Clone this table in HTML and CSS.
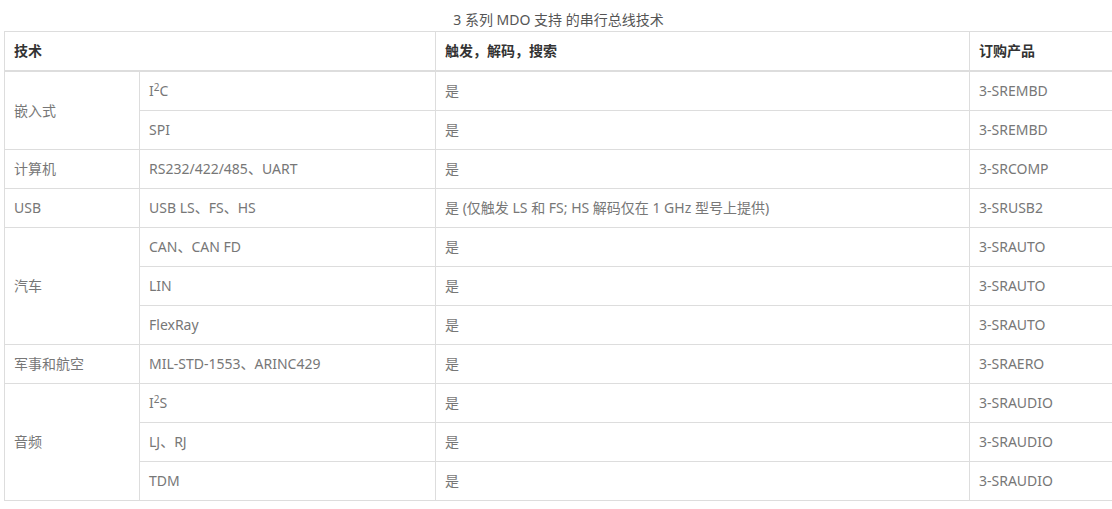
FILE: index.html
```html
<!DOCTYPE html>
<html lang="zh-CN">
<head>
<meta charset="utf-8">
<title>3 系列 MDO 支持 的串行总线技术</title>
<link rel="stylesheet" href="styles.css">
</head>
<body>
<div class="wrap">
<table class="bus">
  <caption>3 系列 MDO 支持 的串行总线技术</caption>
  <colgroup>
    <col class="c1"><col class="c2"><col class="c3"><col class="c4">
  </colgroup>
  <thead>
    <tr><th colspan="2">技术</th><th>触发，解码，搜索</th><th>订购产品</th></tr>
  </thead>
  <tbody>
    <tr><td rowspan="2">嵌入式</td><td>I<sup>2</sup>C</td><td>是</td><td>3-SREMBD</td></tr>
    <tr><td>SPI</td><td>是</td><td>3-SREMBD</td></tr>
    <tr><td>计算机</td><td>RS232/422/485、UART</td><td>是</td><td>3-SRCOMP</td></tr>
    <tr><td>USB</td><td>USB LS、FS、HS</td><td>是 (仅触发 LS 和 FS; HS 解码仅在 1 GHz 型号上提供)</td><td>3-SRUSB2</td></tr>
    <tr><td rowspan="3">汽车</td><td>CAN、CAN FD</td><td>是</td><td>3-SRAUTO</td></tr>
    <tr><td>LIN</td><td>是</td><td>3-SRAUTO</td></tr>
    <tr><td>FlexRay</td><td>是</td><td>3-SRAUTO</td></tr>
    <tr><td>军事和航空</td><td>MIL-STD-1553、ARINC429</td><td>是</td><td>3-SRAERO</td></tr>
    <tr><td rowspan="3">音频</td><td>I<sup>2</sup>S</td><td>是</td><td>3-SRAUDIO</td></tr>
    <tr><td>LJ、RJ</td><td>是</td><td>3-SRAUDIO</td></tr>
    <tr><td>TDM</td><td>是</td><td>3-SRAUDIO</td></tr>
  </tbody>
</table>
</div>
</body>
</html>
```

FILE: styles.css
```css
html, body {
  margin: 0;
  padding: 0;
  background: #fff;
}
body {
  font-family: "Noto Sans", "Noto Sans CJK SC", sans-serif;
  font-size: 14px;
  color: #777;
}
.wrap {
  padding: 0 0 0 4px;
}
.bus {
  width: 1108px;
  border-collapse: collapse;
  table-layout: fixed;
}
.bus caption {
  caption-side: top;
  text-align: center;
  color: #555;
  line-height: 23px;
  padding-top: 8px;
}
.c1 { width: 135px; }
.c2 { width: 296px; }
.c3 { width: 534px; }
.c4 { width: 143px; }
.bus th, .bus td {
  border: 1px solid #ddd;
  padding: 0 9px;
  line-height: 22px;
  text-align: left;
  vertical-align: middle;
}
.bus th {
  height: 38px;
  font-weight: bold;
  color: #333;
  border-bottom: 2px solid #ddd;
}
.bus td {
  height: 38px;
}
.bus sup {
  font-size: 10px;
  line-height: 0;
  vertical-align: 5px;
}
```
